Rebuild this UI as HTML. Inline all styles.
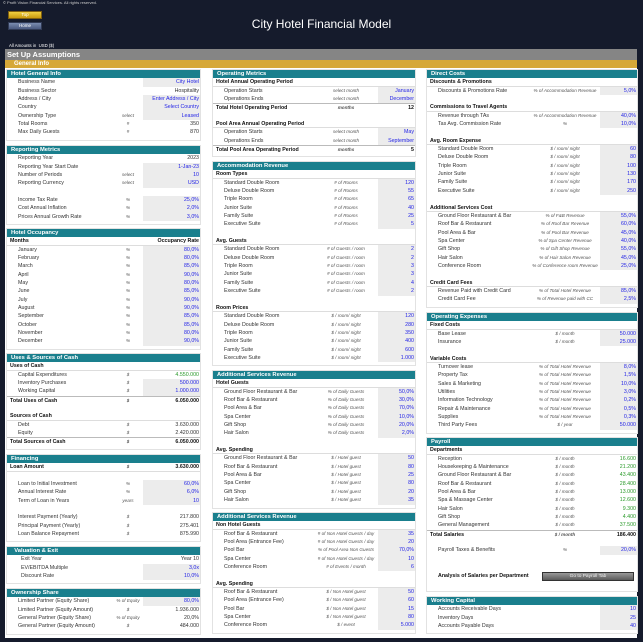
<!DOCTYPE html>
<html><head><meta charset="utf-8">
<style>
*{margin:0;padding:0;box-sizing:border-box}
body{width:643px;height:642px;background:#151b2c;font-family:"Liberation Sans",sans-serif;position:relative;overflow:hidden}
.abs{position:absolute}
.sec{position:absolute;background:#fff;border:1px solid #e2e2e2}
.row{position:relative;height:8.35px;line-height:8.35px;font-size:5.3px;color:#333;white-space:nowrap}
.h{background:#1a7f8d;color:#fff;font-weight:bold;font-size:5.8px;padding-left:4px;height:8.35px;line-height:8.35px}
.s{font-weight:bold;color:#111;padding-left:3px;border-bottom:1px solid #ddd}
.t{font-weight:bold;color:#111;padding-left:3px;border-top:1px solid #bbb}
.n .l{padding-left:11px}
.l{display:inline-block}
.u{position:absolute;top:0;width:90px;text-align:center;font-style:italic;color:#555;font-size:4.6px}
.v{position:absolute;top:0;right:0;height:100%;text-align:right;padding-right:1px}
.i{background:#ececec;color:#2323e6}
.g{color:#2a9a2a}
</style></head><body>
<div class="abs" style="left:3px;top:0;font-size:4px;color:#ccc">© Profit Vision Financial Services. All rights reserved.</div>
<div class="abs" style="left:8px;top:11px;width:34px;height:8px;background:linear-gradient(#f0d040,#c89a10);border:1px solid #806010;font-size:4.5px;color:#fff;text-align:center;line-height:6px">Top</div>
<div class="abs" style="left:8px;top:22px;width:34px;height:8px;background:linear-gradient(#7a8cb0,#4a5a80);border:1px solid #303a55;font-size:4.5px;color:#fff;text-align:center;line-height:6px">Home</div>
<div class="abs" style="left:0;width:643px;top:17px;text-align:center;color:#fff;font-size:12px">City Hotel Financial Model</div>
<div class="abs" style="left:9px;top:43px;font-size:4.3px;color:#fff">All Amounts in &nbsp;USD ($)</div>
<div class="abs" style="left:5px;top:49px;width:632px;height:589px;background:#fff"></div>
<div class="abs" style="left:5px;top:49px;width:632px;height:11px;background:#858585;color:#fff;font-weight:bold;font-size:7.5px;padding-left:2px;line-height:11px">Set Up Assumptions</div>
<div class="abs" style="left:5px;top:60px;width:632px;height:8px;background:#d6a838;color:#fff;font-weight:bold;font-size:6px;padding-left:9px;line-height:8px">General Info</div>
<script>
function sec(x,y,w,uc,vw,rows){
 var d=document.createElement('div');d.className='sec';d.style.left=x+'px';d.style.top=y+'px';d.style.width=w+'px';
 var h='';
 rows.forEach(function(r){
  if(r[0]=='h'){h+='<div class="h">'+r[1]+'</div>';return;}
  if(r[0]=='b'){h+='<div class="row"></div>';return;}
  var cls=r[0]=='s'?'s':r[0]=='t'?'t':'n';
  var vc='v'+(r[4]?' '+r[4]:'');
  h+='<div class="row '+cls+'"><span class="l">'+r[1]+'</span>'+(r[2]?'<span class="u" style="left:'+(uc-45)+'px">'+r[2]+'</span>':'')+(r[3]!==undefined?'<span class="'+vc+'" style="width:'+vw+'px">'+r[3]+'</span>':'')+'</div>';
 });
 h+='<div style="height:3px"></div>';
 d.innerHTML=h;document.body.appendChild(d);
}
var I='i',G='g';
sec(6,69,195,121,57,[['h','Hotel General Info'],['n','Business Name','','City Hotel',I],['n','Business Sector','','Hospitality'],['n','Address / City','','Enter Address / City',I],['n','Country','','Select Country',I],['n','Ownership Type','select','Leased',I],['n','Total Rooms','#','350'],['n','Max Daily Guests','#','870']]);
sec(6,145,195,121,57,[['h','Reporting Metrics'],['n','Reporting Year','','2023'],['n','Reporting Year Start Date','','1-Jan-23',I],['n','Number of Periods','select','10',I],['n','Reporting Currency','select','USD',I],['b'],['n','Income Tax Rate','%','25,0%',I],['n','Cost Annual Inflation','%','2,0%',I],['n','Prices Annual Growth Rate','%','3,0%',I]]);
var m=['January','February','March','April','May','June','July','August','September','October','November','December'],mv=['80,0%','80,0%','85,0%','90,0%','80,0%','85,0%','90,0%','90,0%','85,0%','85,0%','80,0%','90,0%'];
var occ=[['h','Hotel Occupancy'],['s','Months','','Occupancy Rate']];m.forEach(function(x,i){occ.push(['n',x,'%',mv[i],I])});
sec(6,228,195,121,57,occ);
sec(6,353,195,121,57,[['h','Uses &amp; Sources of Cash'],['s','Uses of Cash'],['n','Capital Expenditures','$','4.550.000',G],['n','Inventory Purchases','$','500.000',I],['n','Working Capital','$','1.000.000',I],['t','Total Uses of Cash','$','6.050.000'],['b'],['s','Sources of Cash'],['n','Debt','$','3.630.000'],['n','Equity','$','2.420.000'],['t','Total Sources of Cash','$','6.050.000']]);
sec(6,454,195,121,57,[['h','Financing'],['s','Loan Amount','$','3.630.000'],['b'],['n','Loan to Initial Investment','%','60,0%',I],['n','Annual Interest Rate','%','6,0%',I],['n','Term of Loan in Years','years','10',I],['b'],['n','Interest Payment (Yearly)','$','217.800'],['n','Principal Payment (Yearly)','$','275.401'],['n','Loan Balance Repayment','$','875.990']]);
sec(6,546,195,121,57,[['h','&nbsp;&nbsp;Valuation &amp; Exit'],['n','&nbsp;&nbsp;Exit Year','','Year 10'],['n','&nbsp;&nbsp;EV/EBITDA Multiple','','3,0x',I],['n','&nbsp;&nbsp;Discount Rate','','10,0%',I]]);
sec(6,588,195,121,57,[['h','Ownership Share'],['n','Limited Partner (Equity Share)','% of Equity','80,0%',I],['n','Limited Partner (Equity Amount)','$','1.936.000'],['n','General Partner (Equity Share)','% of Equity','20,0%'],['n','General Partner (Equity Amount)','$','484.000']]);
var W2=204,U2=133,V2=37;
sec(212,69,W2,U2,V2,[['h','Operating Metrics'],['s','Hotel Annual Operating Period'],['n','Operation Starts','select month','January',I],['n','Operations Ends','select month','December',I],['t','Total Hotel Operating Period','months','12'],['b'],['s','Pool Area Annual Operating Period'],['n','Operation Starts','select month','May',I],['n','Operations Ends','select month','September',I],['t','Total Pool Area Operating Period','months','5']]);
var rt=['Standard Double Room','Deluxe Double Room','Triple Room','Junior Suite','Family Suite','Executive Suite'];
var acc=[['h','Accommodation Revenue'],['s','Room Types']];var a1=['120','55','65','40','25','5'],a2=['2','2','3','3','4','2'],a3=['120','280','350','400','600','1.000'];
rt.forEach(function(x,i){acc.push(['n',x,'# of Rooms',a1[i],I])});acc.push(['b'],['s','Avg. Guests']);
rt.forEach(function(x,i){acc.push(['n',x,'# of Guests / room',a2[i],I])});acc.push(['b'],['s','Room Prices']);
rt.forEach(function(x,i){acc.push(['n',x,'$ / room/ night',a3[i],I])});
sec(212,161,W2,U2,V2,acc);
var sv=['Ground Floor Restaurant &amp; Bar','Roof Bar &amp; Restaurant','Pool Area &amp; Bar','Spa Center','Gift Shop','Hair Salon'];
var as=[['h','Additional Services Revenue'],['s','Hotel Guests']];var b1=['50,0%','30,0%','70,0%','10,0%','20,0%','2,0%'],b2=['50','80','25','80','20','35'];
sv.forEach(function(x,i){as.push(['n',x,'% of Daily Guests',b1[i],I])});as.push(['b'],['s','Avg. Spending']);
sv.forEach(function(x,i){as.push(['n',x,'$ / Hotel guest',b2[i],I])});
sec(212,370,W2,U2,V2,as);
var nh=['Roof Bar &amp; Restaurant','Pool Area (Entrance Fee)','Pool Bar','Spa Center','Conference Room'];
sec(212,512,W2,U2,V2,[['h','Additional Services Revenue'],['s','Non Hotel Guests'],['n',nh[0],'# of Non Hotel Guests / day','35',I],['n',nh[1],'# of Non Hotel Guests / day','20',I],['n',nh[2],'% of Pool Area Non Guests','70,0%',I],['n',nh[3],'# of Non Hotel Guests / day','10',I],['n',nh[4],'# of Events / month','6',I],['b'],['s','Avg. Spending'],['n',nh[0],'$ / Non Hotel guest','50',I],['n',nh[1],'$ / Non Hotel guest','60',I],['n',nh[2],'$ / Non Hotel guest','15',I],['n',nh[3],'$ / Non Hotel guest','80',I],['n',nh[4],'$ / event','5.000',I]]);
var W3=212,U3=138,V3=37;
var dc=[['h','Direct Costs'],['s','Discounts &amp; Promotions'],['n','Discounts &amp; Promotions Rate','% of Accommodation Revenue','5,0%',I],['b'],['s','Commissions to Travel Agents'],['n','Revenue through TAs','% of Accommodation Revenue','40,0%',I],['n','Tas Avg. Commission Rate','%','10,0%',I],['b'],['s','Avg. Room Expense']];
var e1=['60','80','100','130','170','250'];rt.forEach(function(x,i){dc.push(['n',x,'$ / room/ night',e1[i],I])});
dc.push(['b'],['s','Additional Services Cost']);
var ac=[['Ground Floor Restaurant &amp; Bar','% of F&amp;B Revenue','55,0%'],['Roof Bar &amp; Restaurant','% of Roof Bar Revenue','60,0%'],['Pool Area &amp; Bar','% of Pool Bar Revenue','45,0%'],['Spa Center','% of Spa Center Revenue','40,0%'],['Gift Shop','% of Gift Shop Revenue','55,0%'],['Hair Salon','% of Hair Salon Revenue','45,0%'],['Conference Room','% of Conference room Revenue','25,0%']];
ac.forEach(function(x){dc.push(['n',x[0],x[1],x[2],I])});
dc.push(['b'],['s','Credit Card Fees'],['n','Revenue Paid with Credit Card','% of Total Hotel Revenue','85,0%',I],['n','Credit Card Fee','% of Revenue paid with CC','2,5%',I]);
sec(426,69,W3,U3,V3,dc);
var oe=[['h','Operating Expenses'],['s','Fixed Costs'],['n','Base Lease','$ / month','50.000',I],['n','Insurance','$ / month','25.000',I],['b'],['s','Variable Costs']];
[['Turnover lease','8,0%'],['Property Tax','1,5%'],['Sales &amp; Marketing','10,0%'],['Utilities','3,0%'],['Information Technology','0,2%'],['Repair &amp; Maintenance','0,5%'],['Supplies','0,3%']].forEach(function(x){oe.push(['n',x[0],'% of Total Hotel Revenue',x[1],I])});
oe.push(['n','Third Party Fees','$ / year','50.000',I]);
sec(426,312,W3,U3,V3,oe);
var pr=[['h','Payroll'],['s','Departments']];
[['Reception','16.600'],['Housekeeping &amp; Maintenance','21.200'],['Ground Floor Restaurant &amp; Bar','43.400'],['Roof Bar &amp; Restaurant','28.400'],['Pool Area &amp; Bar','13.000'],['Spa &amp; Massage Center','12.600'],['Hair Salon','9.300'],['Gift Shop','4.400'],['General Management','37.500']].forEach(function(x){pr.push(['n',x[0],'$ / month',x[1],G])});
pr.push(['t','Total Salaries','$ / month','186.400'],['b'],['n','Payroll Taxes &amp; Benefits','%','20,0%',I],['b'],['b'],['n','<b style="color:#111">Analysis of Salaries per Department</b>'],['b']);
sec(426,437,W3,U3,V3,pr);
sec(426,596,W3,U3,V3,[['h','Working Capital'],['n','Accounts Receivable Days','','10',I],['n','Inventory Days','','25',I],['n','Accounts Payable Days','','40',I]]);
</script>
<div class="abs" style="left:542px;top:572px;width:92px;height:9px;background:linear-gradient(#9a9a9a,#5a5a5a);border:1px solid #333;color:#eee;font-size:4.8px;text-align:center;line-height:7px;font-family:'Liberation Sans',sans-serif">Go to Payroll Tab</div>
</body></html>
